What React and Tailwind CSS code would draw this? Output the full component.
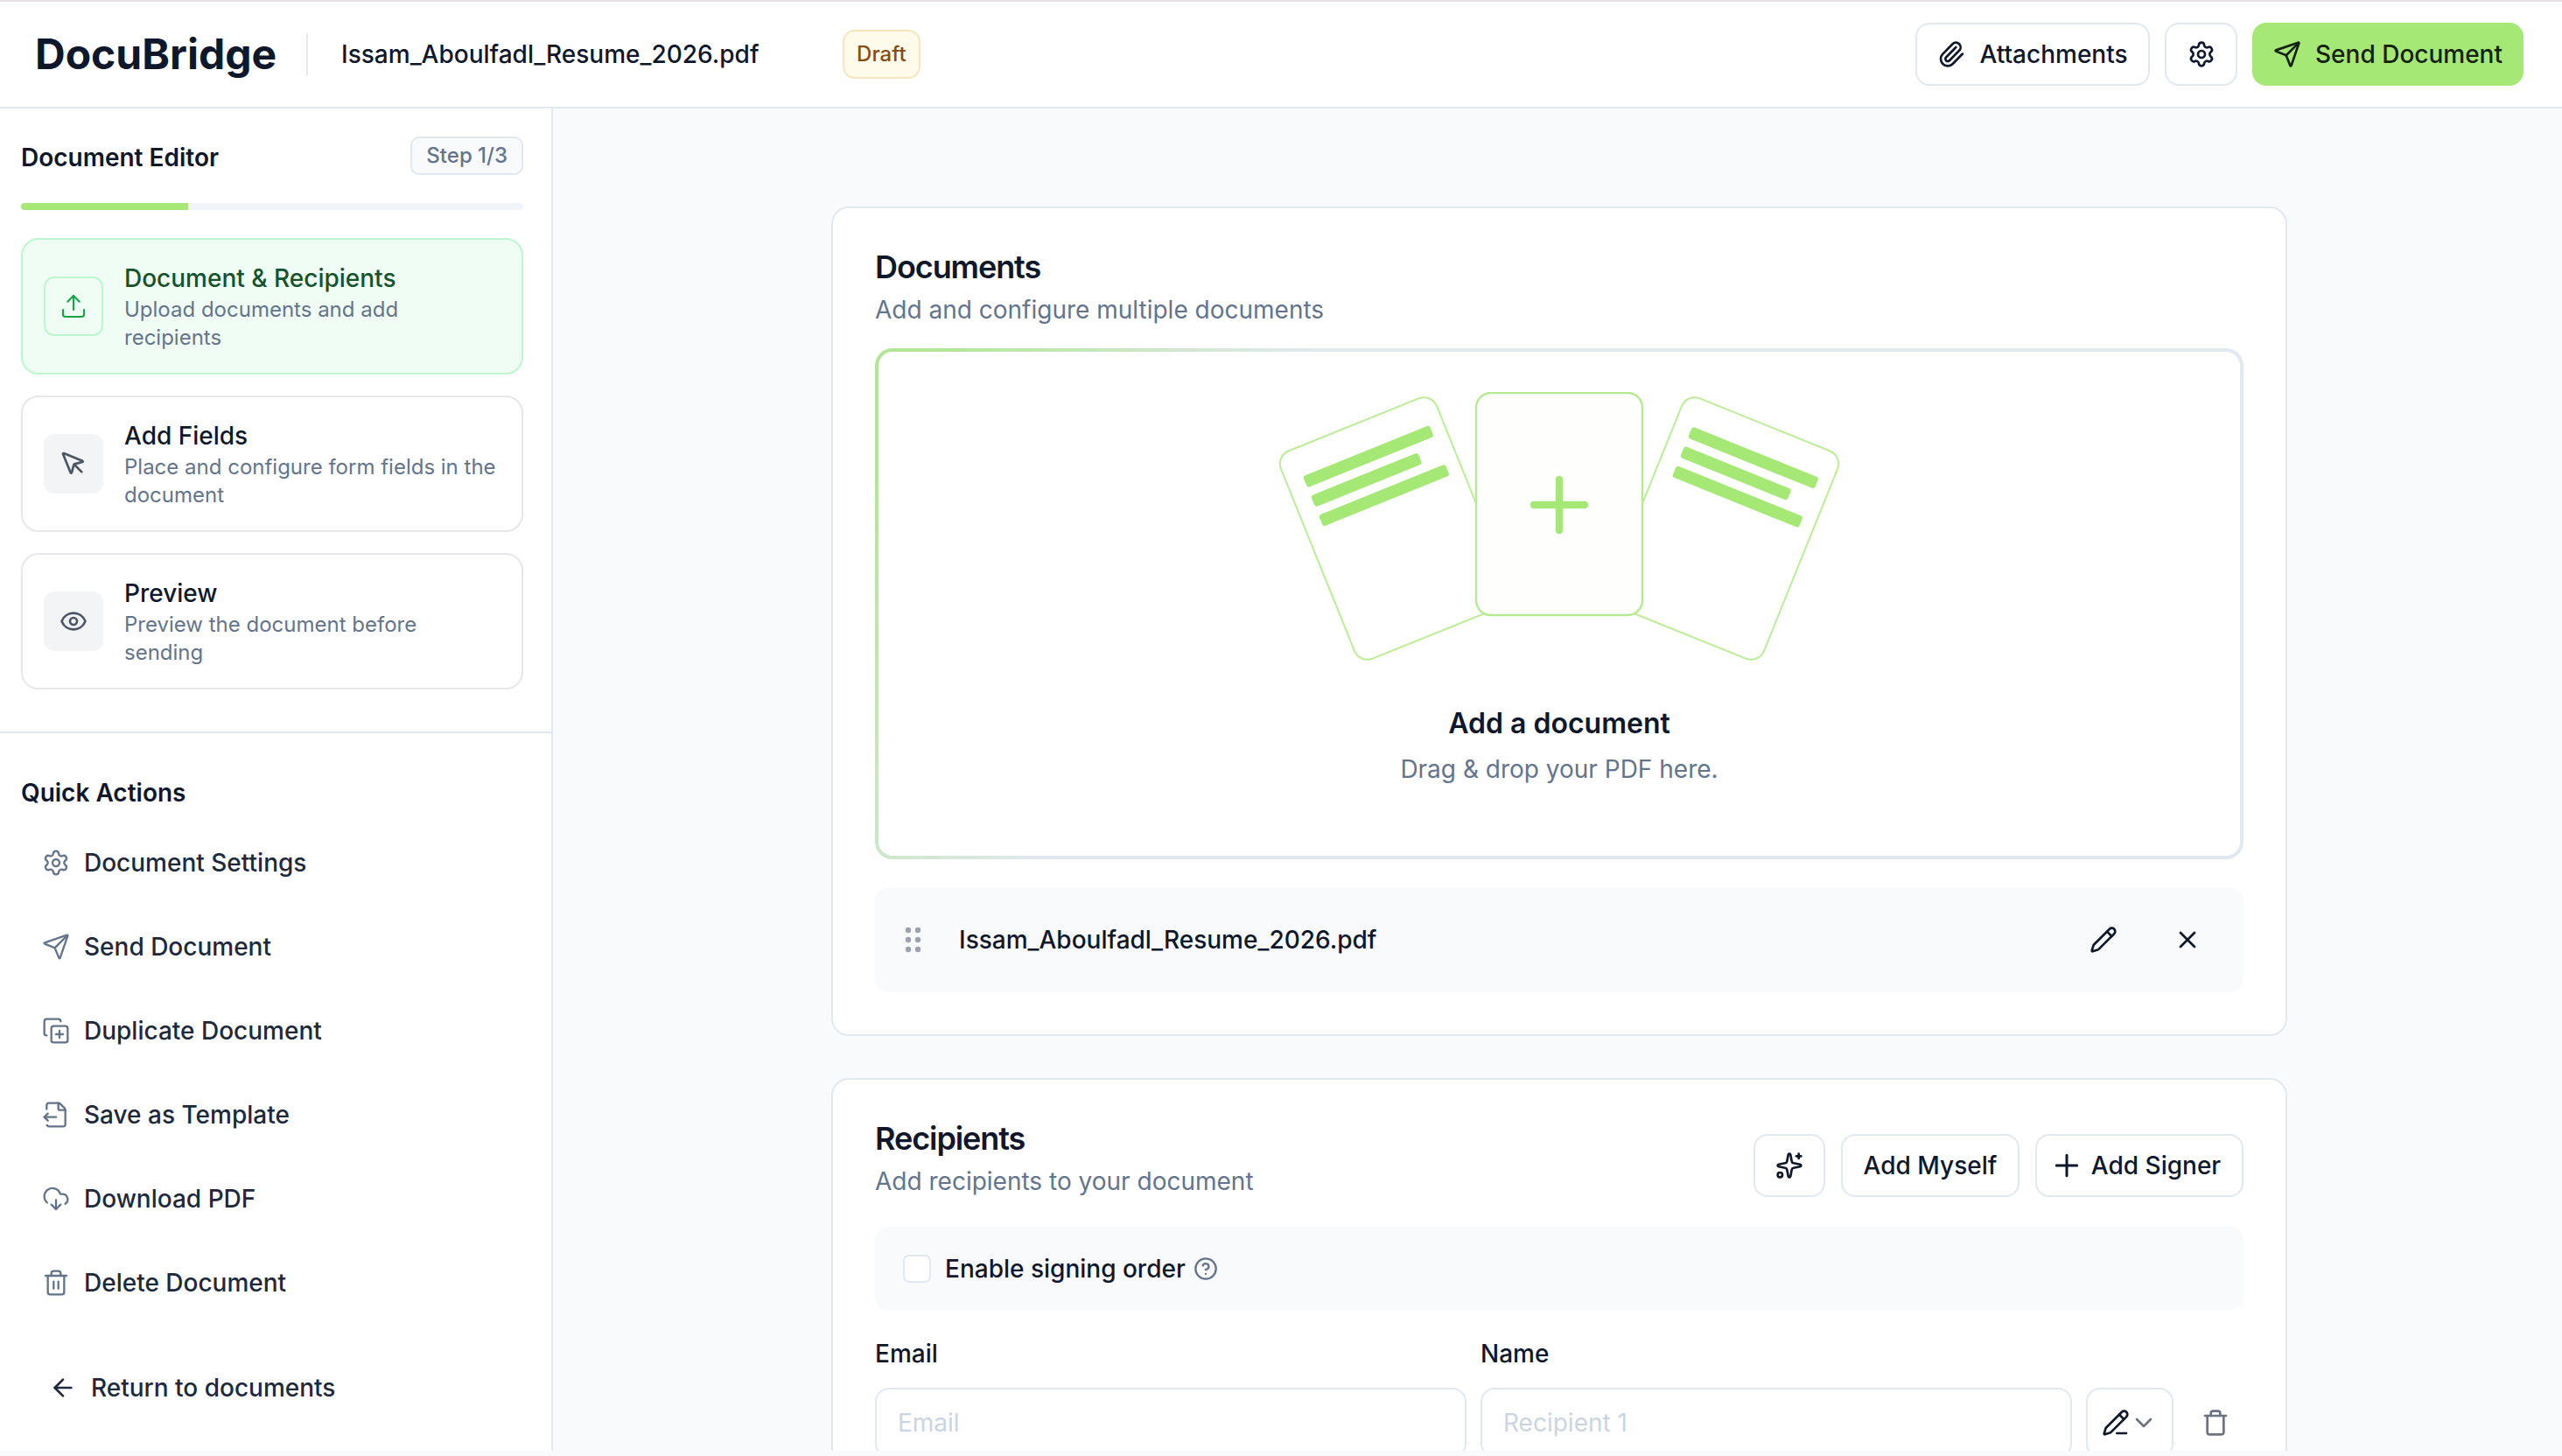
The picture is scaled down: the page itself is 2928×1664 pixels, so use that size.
import React from 'react';
import {
  ArrowLeft, ChevronDown, CircleHelp, CloudDownload, CopyPlus, Eye, FileOutput, MousePointer,
  Paperclip, Pencil, PencilLine, Plus, Send, Settings, Sparkles, Trash, Trash2, Upload, X,
} from 'lucide-react';

const steps = [
  { icon: Upload, title: 'Document & Recipients', text: 'Upload documents and add recipients', active: true },
  { icon: MousePointer, title: 'Add Fields', text: 'Place and configure form fields in the document' },
  { icon: Eye, title: 'Preview', text: 'Preview the document before sending' },
];

const actions = [
  { icon: Settings, label: 'Document Settings' },
  { icon: Send, label: 'Send Document' },
  { icon: CopyPlus, label: 'Duplicate Document' },
  { icon: FileOutput, label: 'Save as Template' },
  { icon: CloudDownload, label: 'Download PDF' },
  { icon: Trash2, label: 'Delete Document' },
];

const BackSheet = ({ cx, angle }) => (
  <g transform={`translate(${cx} 156) rotate(${angle})`}>
    <rect x="-96" y="-128" width="192" height="256" rx="16" fill="#fff" stroke="#bcec98" strokeWidth="2" />
    <rect x="-76" y="-95" width="156" height="14" rx="3" fill="#a5e875" />
    <rect x="-76" y="-71" width="132" height="14" rx="3" fill="#a5e875" />
    <rect x="-76" y="-47" width="156" height="14" rx="3" fill="#a5e875" />
  </g>
);

const Illustration = () => (
  <svg width="680" height="320" viewBox="0 0 680 320" fill="none" className="shrink-0">
    <BackSheet cx={153} angle={-22} />
    <BackSheet cx={527} angle={22} />
    <rect x="245" y="1" width="190" height="254" rx="17" fill="#fefffd" stroke="#b8ea93" strokeWidth="2.5" />
    <path d="M340 100v58M311 129h58" stroke="#a5e875" strokeWidth="8.5" strokeLinecap="round" />
  </svg>
);

const HeaderButton = ({ children, className }) => (
  <button className={`h-[72px] flex items-center justify-center rounded-[16px] border-2 border-[#e2e8f0] bg-white text-[28px] font-medium text-[#0f172a] ${className}`}>
    {children}
  </button>
);

const Field = ({ label, placeholder }) => (
  <div className="flex-1 min-w-0 flex flex-col">
    <label className="text-[28px] leading-[36px] font-medium text-[#0f172a] mb-[21px]">{label}</label>
    <input
      placeholder={placeholder}
      className="h-[80px] w-full rounded-[16px] border-2 border-[#e2e8f0] bg-white px-[24px] text-[28px] placeholder:text-[#cbd5e1]"
    />
  </div>
);

export default function App() {
  return (
    <div className="h-screen flex flex-col overflow-hidden bg-[#f8fafc] pb-[6px] font-[Inter,sans-serif]">
      <div className="h-[2px] shrink-0 bg-[#e9dfe9]" />
      <header className="h-[122px] shrink-0 flex items-center justify-between bg-white border-b-2 border-[#e2e8f0] pl-[40px] pr-[44px]">
        <div className="flex items-center">
          <span className="text-[48px] leading-none font-bold text-[#0f172a]">DocuBridge</span>
          <div className="w-[2px] h-[48px] bg-[#e2e8f0] ml-[34px] mr-[38px]" />
          <span className="text-[28px] font-medium text-[#0f172a] w-[573px]">Issam_Aboulfadl_Resume_2026.pdf</span>
          <span className="h-[56px] px-[14px] flex items-center rounded-[14px] border-2 border-[#f7e5bf] bg-[#fffbeb] text-[24px] font-medium text-[#854d0e]">Draft</span>
        </div>
        <div className="flex items-center gap-[17px]">
          <HeaderButton className="w-[268px] gap-[16px]">
            <Paperclip size={32} />
            Attachments
          </HeaderButton>
          <HeaderButton className="w-[83px]">
            <Settings size={32} />
          </HeaderButton>
          <button className="h-[72px] w-[310px] flex items-center justify-center gap-[16px] rounded-[16px] bg-[#a5e875] text-[28px] font-medium text-[#14210c]">
            <Send size={32} />
            Send Document
          </button>
        </div>
      </header>

      <div className="flex-1 min-h-0 flex">
        <aside className="w-[632px] shrink-0 flex flex-col bg-white border-r-2 border-[#e2e8f0]">
          <div className="pl-[24px] pr-[32px] pt-[32px] pb-[48px] border-b-2 border-[#e2e8f0]">
            <div className="flex items-center justify-between">
              <h2 className="pt-[4px] text-[28px] leading-[36px] font-semibold text-[#0f172a]">Document Editor</h2>
              <span className="h-[44px] px-[16px] flex items-center rounded-[10px] border-2 border-[#e2e8f0] bg-[#f8fafc] text-[24px] font-medium text-[#64748b]">Step 1/3</span>
            </div>
            <div className="h-[8px] mt-[32px] rounded-full bg-[#f1f5f9] overflow-hidden">
              <div className="h-full w-1/3 bg-[#a5e875]" />
            </div>
            <div className="mt-[32px] flex flex-col gap-[24px]">
              {steps.map((step) => (
                <div
                  key={step.title}
                  className={`h-[156px] flex items-center gap-[24px] rounded-[20px] border-2 px-[24px] ${step.active ? 'border-[#bbf7d0] bg-[#f0fdf4]' : 'border-[#e5e7eb] bg-white'}`}
                >
                  <div className={`w-[68px] h-[68px] shrink-0 flex items-center justify-center rounded-[12px] ${step.active ? 'border-2 border-[#bbf7d0] text-[#16a34a]' : 'bg-[#f3f4f6] text-[#4b5563]'}`}>
                    <step.icon size={32} strokeWidth={step.active ? 1.6 : 2} />
                  </div>
                  <div className="min-w-0">
                    <div className={`text-[28px] leading-[40px] font-medium ${step.active ? 'text-[#14532d]' : 'text-[#0f172a]'}`}>{step.title}</div>
                    <div className="text-[24px] leading-[32px] text-[#64748b]">{step.text}</div>
                  </div>
                </div>
              ))}
            </div>
          </div>

          <div className="px-[24px] pt-[50px]">
            <h2 className="text-[28px] leading-[36px] font-semibold text-[#0f172a] mb-[14px]">Quick Actions</h2>
            {actions.map((action) => (
              <div key={action.label} className="h-[96px] flex items-center gap-[16px] pl-[24px] text-[28px] font-medium text-[#1e293b]">
                <action.icon size={32} strokeWidth={1.75} className="text-[#64748b]" />
                {action.label}
              </div>
            ))}
            <div className="h-[96px] mt-[24px] flex items-center gap-[16px] pl-[32px] text-[28px] font-medium text-[#1e293b]">
              <ArrowLeft size={32} />
              Return to documents
            </div>
          </div>
        </aside>

        <main className="flex-1 min-w-0 overflow-hidden flex justify-center pl-[4px] pt-[112px]">
          <div className="w-[1664px] flex flex-col gap-[48px]">
            <section className="rounded-[20px] border-2 border-[#e2e8f0] bg-white px-[48px] pt-[45px] pb-[48px]">
              <h2 className="text-[36px] leading-[44px] font-semibold tracking-[-0.03em] text-[#0f172a]">Documents</h2>
              <p className="mt-[7px] text-[28px] leading-[40px] text-[#64748b]">Add and configure multiple documents</p>
              <div className="mt-[24px] rounded-[20px] p-[4px] bg-[linear-gradient(118deg,#b2e695_4%,#e2e8f0_27%)]">
                <div className="h-[576px] rounded-[16px] bg-white flex flex-col items-center pt-[46px]">
                  <Illustration />
                  <div className="mt-[39px] text-[32px] leading-[40px] font-semibold text-[#0f172a]">Add a document</div>
                  <div className="mt-[12px] text-[28px] leading-[40px] text-[#64748b]">Drag &amp; drop your PDF here.</div>
                </div>
              </div>
              <div className="mt-[32px] h-[120px] flex items-center rounded-[16px] bg-[#f8fafc] pl-[32px] pr-[48px]">
                <svg width="24" height="32" viewBox="0 0 24 32" fill="#9ca3af" className="shrink-0">
                  <circle cx="6" cy="5" r="3.2" /><circle cx="17" cy="5" r="3.2" />
                  <circle cx="6" cy="16" r="3.2" /><circle cx="17" cy="16" r="3.2" />
                  <circle cx="6" cy="27" r="3.2" /><circle cx="17" cy="27" r="3.2" />
                </svg>
                <span className="ml-[40px] flex-1 text-[28px] font-medium text-[#0f172a]">Issam_Aboulfadl_Resume_2026.pdf</span>
                <Pencil size={32} className="text-[#0f172a]" />
                <X size={32} className="ml-[64px] text-[#0f172a]" />
              </div>
            </section>

            <section className="rounded-[20px] border-2 border-[#e2e8f0] bg-white px-[48px] pt-[45px] pb-[48px]">
              <div className="flex justify-between">
                <div>
                  <h2 className="text-[36px] leading-[44px] font-semibold tracking-[-0.03em] text-[#0f172a]">Recipients</h2>
                  <p className="mt-[7px] text-[28px] leading-[40px] text-[#64748b]">Add recipients to your document</p>
                </div>
                <div className="flex items-center gap-[18px] self-end mb-[2px]">
                  <HeaderButton className="w-[82px]"><Sparkles size={32} /></HeaderButton>
                  <HeaderButton className="w-[204px]">Add Myself</HeaderButton>
                  <HeaderButton className="w-[238px] gap-[8px] pr-[10px]"><Plus size={40} strokeWidth={1.8} />Add Signer</HeaderButton>
                </div>
              </div>
              <div className="mt-[32px] h-[96px] flex items-center rounded-[16px] bg-[#f8fafc] pl-[32px]">
                <div className="w-[32px] h-[32px] rounded-[7px] border-2 border-[#e2e8f0] bg-white" />
                <span className="ml-[16px] text-[28px] font-medium text-[#0f172a]">Enable signing order</span>
                <CircleHelp size={28} className="ml-[9px] text-[#64748b]" />
              </div>
              <div className="mt-[31px] flex items-end gap-[16px]">
                <Field label="Email" placeholder="Email" />
                <Field label="Name" placeholder="Recipient 1" />
                <div className="w-[100px] h-[80px] shrink-0 flex items-center justify-center rounded-[16px] border-2 border-[#e2e8f0] bg-white">
                  <PencilLine size={32} className="text-[#0f172a]" />
                  <ChevronDown size={32} className="text-[#6b7280]" />
                </div>
                <div className="w-[64px] h-[80px] shrink-0 flex items-center justify-center">
                  <Trash size={32} className="text-[#6b7280]" />
                </div>
              </div>
            </section>
          </div>
        </main>
      </div>
    </div>
  );
}
